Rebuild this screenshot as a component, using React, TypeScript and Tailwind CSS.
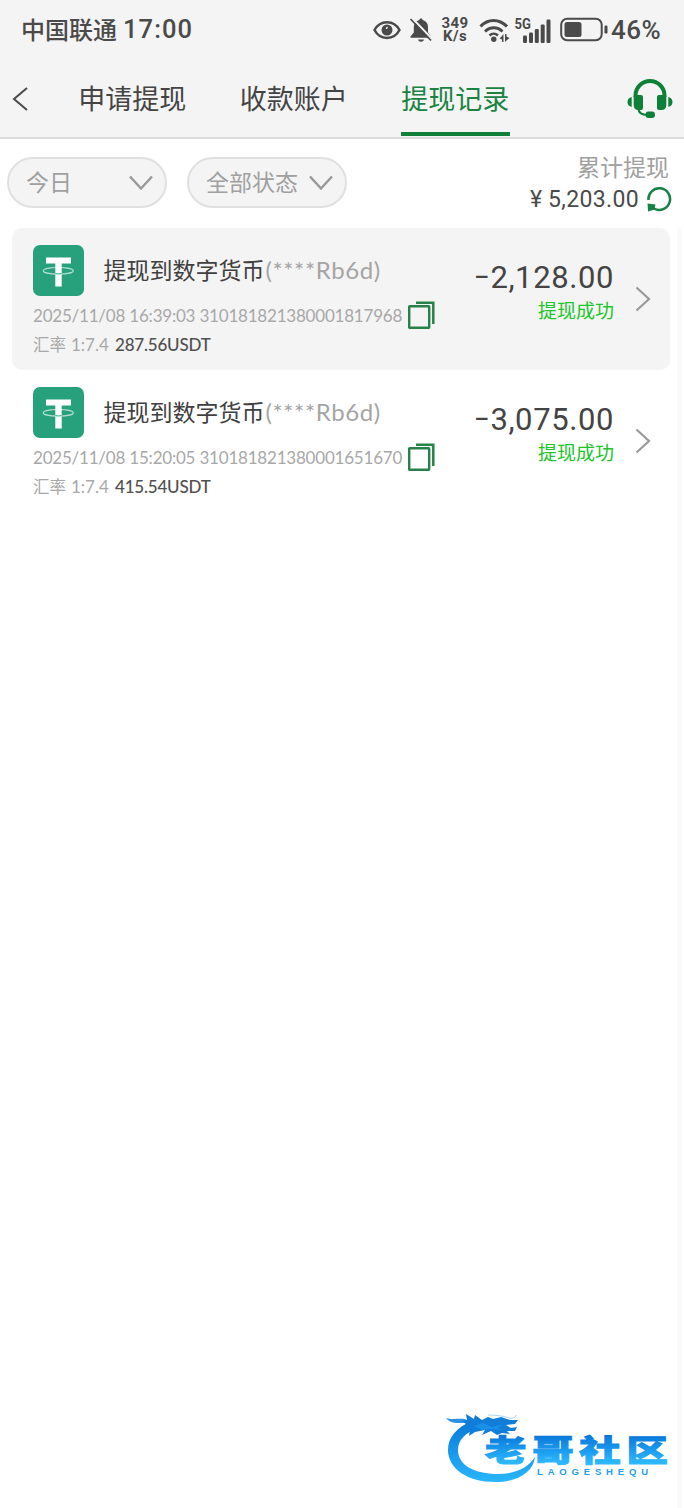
import React, { useState } from 'react';

interface WithdrawRecord {
  id: string;
  time: string;
  amount: string;
  usdt: string;
}

const TABS = ['申请提现', '收款账户', '提现记录'];

const RECORDS: WithdrawRecord[] = [
  { id: '310181821380001817968', time: '2025/11/08 16:39:03', amount: '2,128.00', usdt: '287.56USDT' },
  { id: '310181821380001651670', time: '2025/11/08 15:20:05', amount: '3,075.00', usdt: '415.54USDT' },
];

function StatusBar() {
  return (
    <div className="flex h-[60px] items-center pl-[21px] text-[#4a4a4a]">
      <span className="w-[102px] whitespace-nowrap pb-0.5 text-[24px] font-medium leading-none">中国联通</span>
      <span className="w-[250px] font-[Roboto] text-[25.500px] font-medium leading-none tracking-[1.100px]">17:00</span>
      {/* Eye */}
      <svg width="28" height="20" viewBox="0 0 28 20" fill="none" stroke="currentColor" strokeWidth="2.500" className="shrink-0">
        <path d="M1.500 10C7 -.5 21 -.5 26.500 10C21 20.500 7 20.500 1.500 10Z" />
        <circle cx="14" cy="10" r="5.500" fill="currentColor" stroke="none" />
        <path d="M14.500 7a3 3 0 0 0-1 2" stroke="#f4f4f4" strokeWidth="1.300" />
      </svg>
      {/* Muted bell */}
      <svg width="24" height="26" viewBox="0 0 24 26" className="ml-2 shrink-0">
        <path d="M12 1.500c1 0 1.600.6 1.700 1.500C17 4 19 6.500 19 10v5.500l3 4v1.200H1.500v-1.200l3.300-4V10C4.800 6.500 7 4 10.300 3c.1-.9.700-1.500 1.700-1.500Z" fill="currentColor" />
        <path d="M9 22.500h6c-.5 1.600-1.500 2.200-3 2.200s-2.500-.6-3-2.200Z" fill="currentColor" />
        <path d="M3.500 1.500L24 23" stroke="#f4f4f4" strokeWidth="2" />
        <path d="M1.500 2L22 23.500" stroke="currentColor" strokeWidth="1.700" />
      </svg>
      <div className="ml-2 w-[28px] shrink-0 text-center font-[Roboto] text-[15px] font-bold leading-[13px]">
        <div className="tracking-[0.4px]">349</div>
        <div className="tracking-[0.4px]">K/s</div>
      </div>
      {/* Wi-Fi */}
      <svg width="31" height="25" viewBox="0 0 31 25" fill="none" stroke="currentColor" strokeWidth="3" className="ml-2.5 shrink-0">
        <path d="M1.500 8.500C9 .5 20 .5 28 8.500" />
        <path d="M6 13.500c5-5 12.500-5 17.500 0" strokeWidth="2.800" />
        <path d="M10.500 17.500c2.500-2.300 6-2.300 8.500 0" strokeWidth="2.400" />
        <circle cx="14.800" cy="21.200" r="2.700" fill="currentColor" stroke="none" />
        <path d="M24.500 16v8h-1.500v-2.500L20.500 20.500 23 18ZM26 24v-8h1.500v2.500l3 1.500-3 2.500Z" fill="currentColor" stroke="none" />
      </svg>
      {/* 5G signal */}
      <svg width="38" height="27" viewBox="0 0 38 27" fill="currentColor" className="ml-1 shrink-0">
        <text x="0.500" y="11.500" fontFamily="Roboto" fontSize="14.500" fontWeight="700" textLength="16.500" lengthAdjust="spacingAndGlyphs">5G</text>
        <rect x="9" y="18.500" width="4" height="7.500" rx="1.200" />
        <rect x="15" y="15.500" width="4" height="10.500" rx="1.200" />
        <rect x="20.800" y="12" width="4" height="14" rx="1.200" />
        <rect x="26.700" y="7.500" width="4" height="18.500" rx="1.200" />
        <rect x="32.500" y="2.500" width="4" height="23.500" rx="1.200" />
      </svg>
      {/* Battery */}
      <svg width="48" height="26" viewBox="0 0 48 26" className="ml-2 shrink-0">
        <rect x="1.200" y="1.800" width="40.500" height="21.500" rx="6" fill="none" stroke="currentColor" strokeWidth="2" />
        <rect x="4.500" y="5" width="17" height="15" rx="2.500" fill="currentColor" />
        <rect x="44.500" y="8.500" width="3" height="8" rx="1.200" fill="currentColor" />
      </svg>
      <span className="ml-[3px] font-[Roboto] text-[26px] font-medium leading-none tracking-[0.500px]">46%</span>
    </div>
  );
}

function HeadsetIcon() {
  return (
    <svg width="46" height="40" viewBox="0 0 46 40" fill="#0f8038">
      <path d="M8.500 18V16.500a14.500 14.500 0 0 1 29 0V18" fill="none" stroke="#0f8038" strokeWidth="4" />
      <path d="M6.700 17.500q0-1.500 1.500-1.500H14q2 0 2 2v11q0 2-2 2h-2.500q-4.800 0-4.800-5Z" />
      <path d="M39.300 17.500q0-1.500-1.500-1.500H32q-2 0-2 2v11q0 2 2 2h2.500q4.800 0 4.800-5Z" />
      <path d="M4.700 18v10C2 27.500.5 25.500.5 23s1.500-4.500 4.200-5ZM41.300 18v10c2.700-.5 4.200-2.500 4.200-5s-1.500-4.500-4.200-5Z" />
      <path d="M11.500 29c0 5 3 7 9 7" fill="none" stroke="#0f8038" strokeWidth="2.200" />
      <rect x="18.500" y="32.500" width="9.500" height="6.500" rx="3" />
    </svg>
  );
}

function FilterSelect({ label }: { label: string }) {
  return (
    <button className="flex h-[51px] w-[160px] items-center justify-between rounded-full border-2 border-[#e0e0e0] bg-[#f4f4f4] pl-[17px] pr-3 text-[23px] text-[#a0a0a0]">
      <span className="pb-0.5">{label}</span>
      <svg width="24" height="16" viewBox="0 0 24 16" fill="none" stroke="#999" strokeWidth="2.500">
        <path d="M1 1.500L12 13.500L23 1.500" />
      </svg>
    </button>
  );
}

function TetherIcon() {
  return (
    <svg width="51" height="51" viewBox="0 0 51 51" className="shrink-0">
      <rect width="51" height="51" rx="7" fill="#27a17b" />
      <ellipse cx="25.300" cy="25.800" rx="15" ry="3.300" fill="none" stroke="#b4ddd0" strokeWidth="1.200" />
      <path d="M13 12.500h25v6h-9.300v23h-6.400v-23H13Z" fill="#fff" />
      <path d="M22.300 28.700q3 .5 6.400 0" fill="none" stroke="#27a17b" strokeWidth="1" />
    </svg>
  );
}

function CopyIcon() {
  return (
    <svg width="27" height="28" viewBox="0 0 27 28" fill="none" stroke="#278149" strokeWidth="2.400" className="shrink-0">
      <rect x="1.200" y="5.200" width="20" height="21.500" rx="0.500" />
      <path d="M8 1.800h17.300V23" strokeWidth="2.500" />
    </svg>
  );
}

function RecordItem({ record, active, onSelect }: { record: WithdrawRecord; active: boolean; onSelect: () => void }) {
  return (
    <div
      onClick={onSelect}
      className={`flex h-[142px] w-[658px] rounded-[10px] pl-[21px] ${active ? 'bg-[#f4f4f4]' : 'bg-white'}`}
    >
      <div className="w-[420px] pt-[17px]">
        <div className="flex items-start whitespace-nowrap">
          <TetherIcon />
          <div className="ml-[19.500px] flex h-[51px] items-center pb-0.5 text-[23px] text-[#404040]">
            提现到数字货币
            <span className="ml-px font-[Lato] text-[24px] tracking-[0.600px] text-[#a5a5a5]">(****Rb6d)</span>
          </div>
        </div>
        <div className="flex h-[38px] items-center whitespace-nowrap text-[#a8a8a8]">
          <span className="w-[375px] font-[Lato] text-[17px] leading-none tracking-[-0.210px]">
            {record.time} {record.id}
          </span>
          <CopyIcon />
        </div>
        <div className="flex h-5 items-center whitespace-nowrap text-[16.500px] leading-none text-[#a8a8a8]">
          <span>汇率</span>
          <span className="ml-[5px] w-[44px] font-[Lato] text-[17px]">1:7.4</span>
          <span className="font-[Lato] text-[17px] font-medium tracking-[-0.200px] text-[#505050]">{record.usdt}</span>
        </div>
      </div>
      <div className="flex w-[161px] flex-col items-end pt-8">
        <span className="font-[Roboto] text-[31px] leading-[36px] tracking-[0.600px] text-[#444]">
          <span className="inline-block origin-right scale-x-75">–</span>
          {record.amount}
        </span>
        <span className="mt-px text-[19px] leading-[26px] text-[#20c52b]">提现成功</span>
      </div>
      <svg width="16" height="26" viewBox="0 0 16 26" fill="none" stroke="#999" strokeWidth="2.200" className="ml-[21px] mt-[58px]">
        <path d="M1.500 1.500L14 13L1.500 24.500" />
      </svg>
    </div>
  );
}

function CommunityLogo() {
  return (
    <svg width="224" height="74" viewBox="0 0 224 74">
      <defs>
        <linearGradient id="logo-ring" x1="0" y1="0" x2="0" y2="1">
          <stop offset="0" stopColor="#0878d8" />
          <stop offset="1" stopColor="#29b6fb" />
        </linearGradient>
        <linearGradient id="logo-word" gradientUnits="userSpaceOnUse" x1="0" y1="-26" x2="0" y2="2">
          <stop offset="0" stopColor="#0877d9" />
          <stop offset="1" stopColor="#2cb9ff" />
        </linearGradient>
      </defs>
      <path d="M26 11C11 17 2 27 2 40c0 19 20 32 47 32 22 0 38-9 40-25-7 11-20 17-37 17C28 64 12 55 12 40c0-10 7-17 20-22Z" fill="url(#logo-ring)" />
      {/* Dragon head and whiskers */}
      <path d="M0 8c6 2 13 0 19 1l4 3-7 1C9 13 4 13 0 8Z" fill="#2c91e2" />
      <path d="M20 4l8 5 1-4 7 5 6-3 5 2 8-2 9 3 8 0-3 4-9 1 5 3 6-1-2 4-8 0 3 3-8-1-5 2-6-4-9 4 3-5-10 2-6 4 1-6-6-1 2-5-4-3 5-1Z" fill="#107dd8" />
      <path d="M28 16l9-3 9 4 12-3-7 4 6 2-12-1-9 1Z" fill="#1b91e6" />
      <path d="M42 5c8 0 15 1 22 3 3 1 6-1 6-3" fill="none" stroke="#a8d4f4" strokeWidth="1" />
      <text
        transform="translate(39 51) scale(1.380 1)"
        fontFamily="'Noto Sans CJK SC', sans-serif"
        fontSize="30"
        fontWeight="900"
        textLength="132.500"
        lengthAdjust="spacing"
        fill="url(#logo-word)"
        stroke="url(#logo-word)"
        strokeWidth="1"
      >
        老哥社区
      </text>
      <text x="91" y="64.500" fontFamily="'Liberation Sans', sans-serif" fontSize="9.500" fontWeight="700" fill="#249feb" textLength="111">LAOGESHEQU</text>
    </svg>
  );
}

export default function App() {
  const [activeTab, setActiveTab] = useState(2);
  const [selected, setSelected] = useState(RECORDS[0].id);

  return (
    <div className="flex h-[1508px] w-[684px] flex-col overflow-hidden bg-white font-['Noto_Sans_CJK_SC',sans-serif]">
      <header className="h-[139px] border-b-2 border-[#dcdcdc] bg-[#f4f4f4]">
        <StatusBar />
        <nav className="flex h-[77px] items-center pl-3">
          <svg width="16" height="24" viewBox="0 0 16 24" fill="none" stroke="#4a4a4a" strokeWidth="2">
            <path d="M15 1L2 12L15 23" />
          </svg>
          <div className="ml-[50px] flex h-full gap-[53px]">
            {TABS.map((tab, i) => (
              <button
                key={tab}
                onClick={() => setActiveTab(i)}
                className={`flex h-[76px] w-[108.500px] items-center justify-center whitespace-nowrap border-y-4 border-t-transparent text-[27px] ${
                  i === activeTab ? 'border-b-[#0f8038] text-[#1b8342]' : 'border-b-transparent text-[#444]'
                }`}
              >
                {tab}
              </button>
            ))}
          </div>
          <div className="ml-auto pr-[11px]">
            <HeadsetIcon />
          </div>
        </nav>
      </header>

      <div className="flex flex-1">
        <main className="flex w-[677px] flex-col">
          <div className="flex h-[89px] pl-[7px] pt-[18px]">
            <div className="flex gap-5">
              <FilterSelect label="今日" />
              <FilterSelect label="全部状态" />
            </div>
            <div className="-mt-[5px] ml-auto flex flex-col items-end pr-[5px]">
              <span className="mr-[3px] text-[23px] leading-[28px] text-[#a0a0a0]">累计提现</span>
              <div className="mt-1 flex items-center text-[23px] leading-[32px] text-[#4a4a4a]">
                <span className="font-[Roboto]">¥</span>
                <span className="ml-1.5 font-[Roboto] tracking-[0.350px]">5,203.00</span>
                <svg width="26" height="26" viewBox="0 0 26 26" className="ml-[7px]">
                  <path d="M2.500 13A10.800 10.800 0 1 1 8 21.500" fill="none" stroke="#168243" strokeWidth="2.500" />
                  <path d="M1.500 16.500l8 1-1 5-6.500 2Z" fill="#168243" />
                </svg>
              </div>
            </div>
          </div>
          <div className="flex flex-col pl-3">
            {RECORDS.map((record) => (
              <RecordItem
                key={record.id}
                record={record}
                active={record.id === selected}
                onSelect={() => setSelected(record.id)}
              />
            ))}
          </div>
          <div className="mb-6 mt-auto flex justify-end pr-[7px]">
            <CommunityLogo />
          </div>
        </main>
        <div className="mt-[89px] w-[5px] bg-[#fafafa]" />
      </div>
    </div>
  );
}
